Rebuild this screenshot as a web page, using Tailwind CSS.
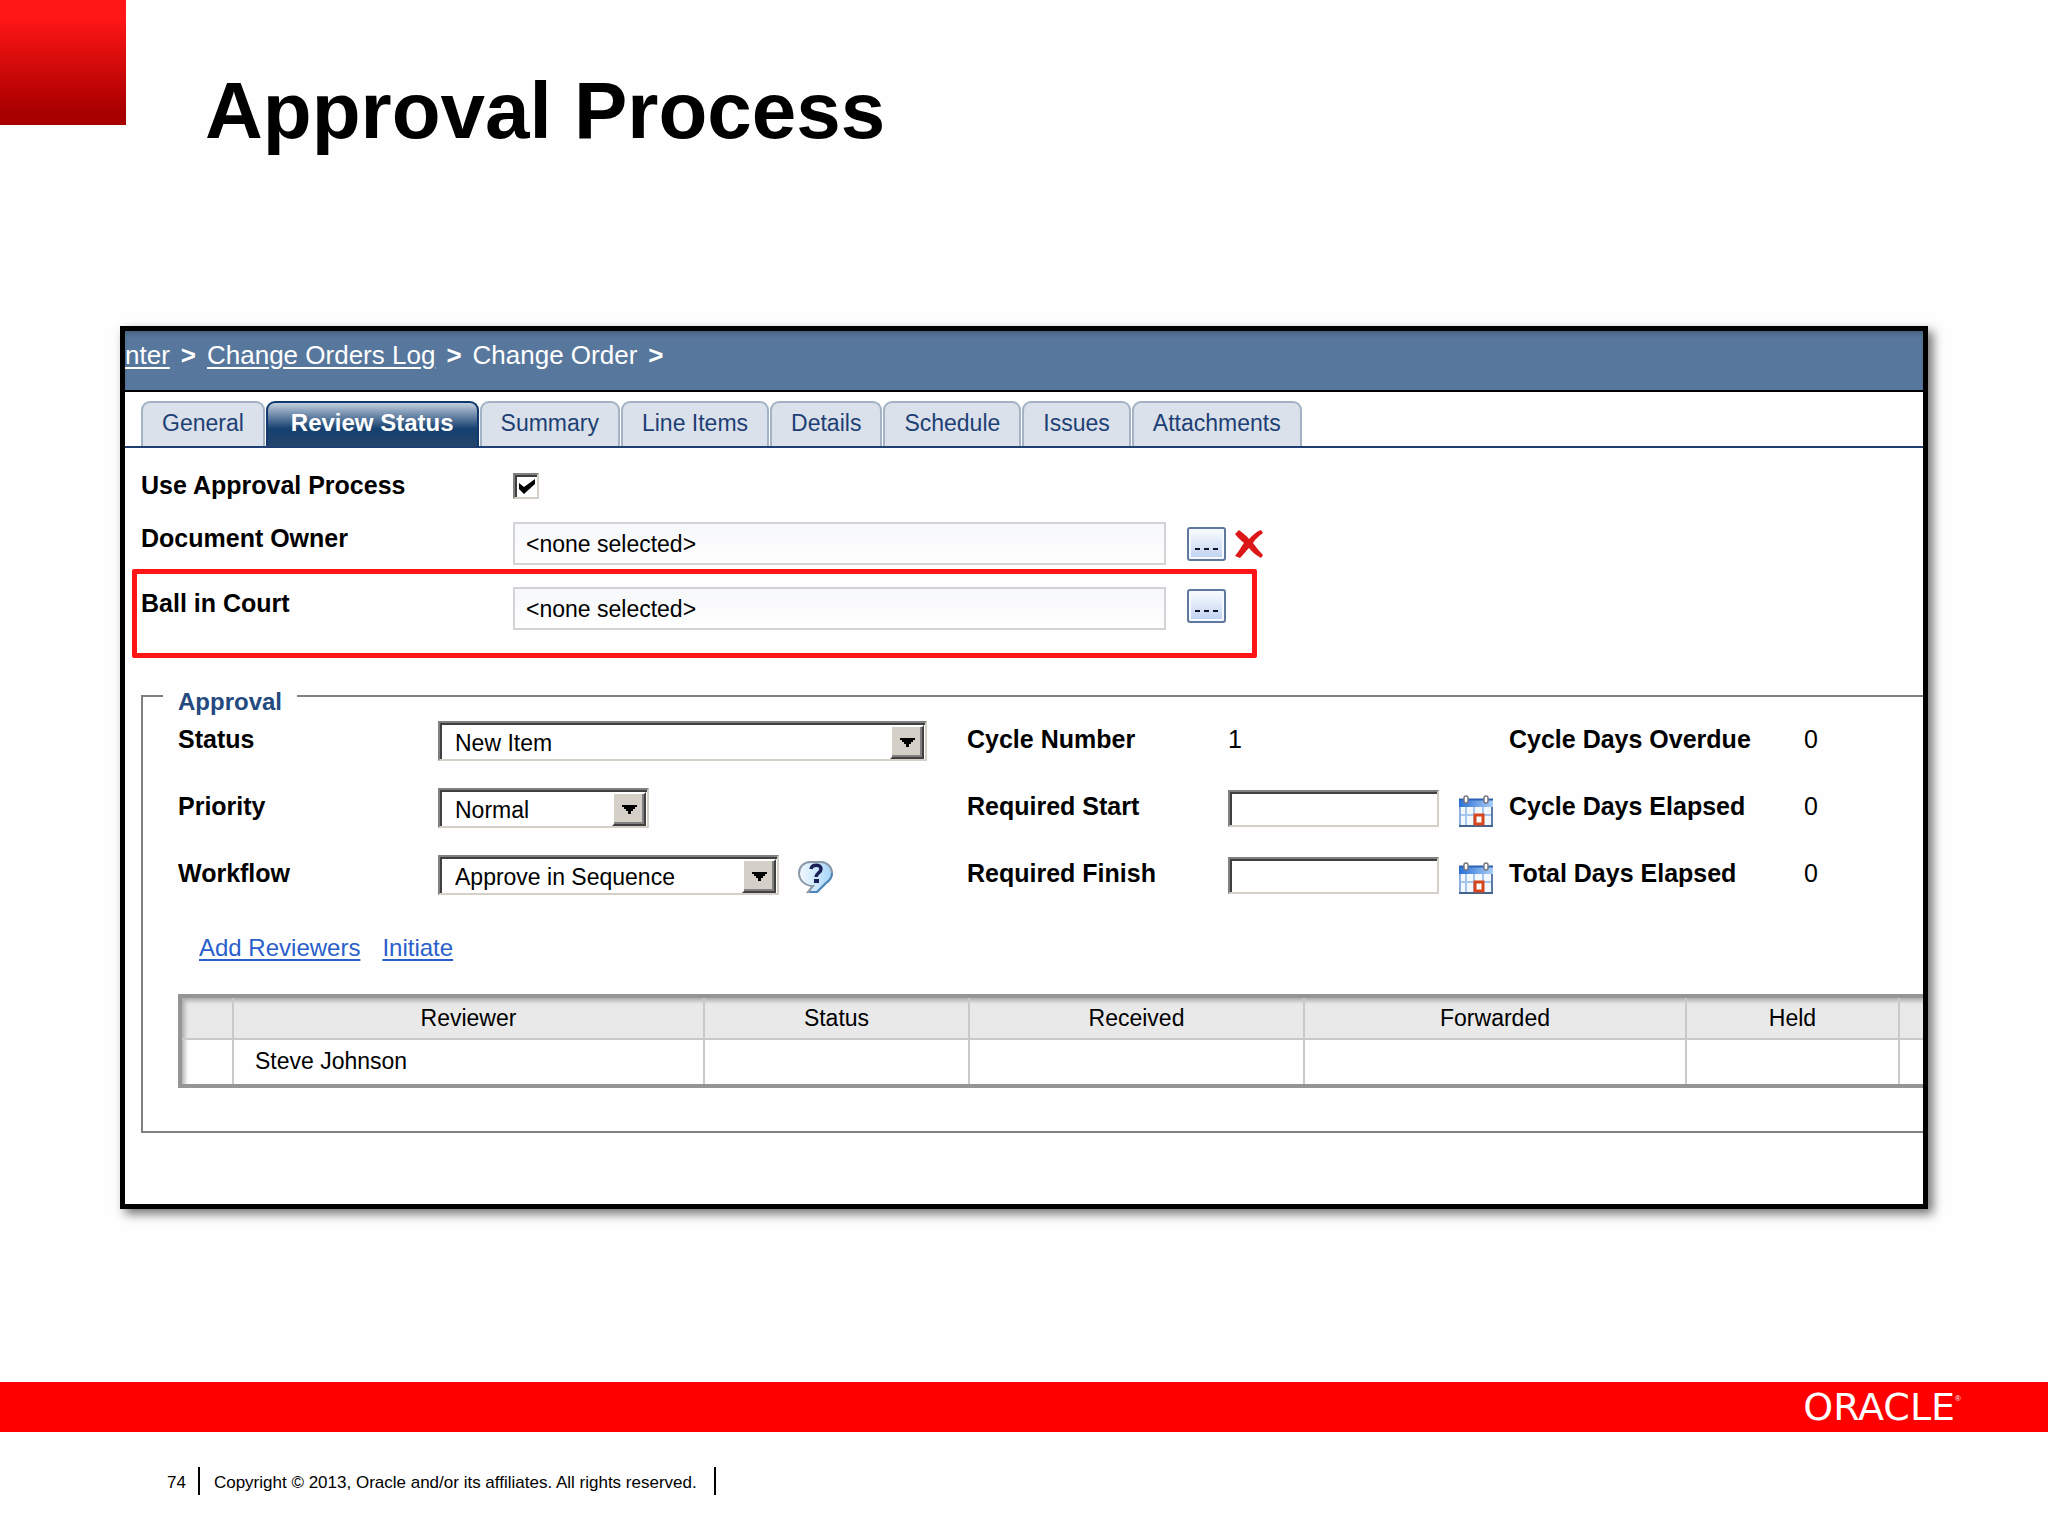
<!DOCTYPE html>
<html lang="en">

<head>
    <meta charset="UTF-8">
    <meta name="viewport" content="width=device-width, initial-scale=1.0">
    <title>Approval Process</title>
    <script src="https://cdn.jsdelivr.net/npm/@tailwindcss/browser@4"></script>
</head>

<body class="flex min-h-screen flex-col bg-[#fefefe] font-['Liberation_Sans',Arial,sans-serif] text-black">
    <!-- Shared icons -->
    <svg class="absolute size-0" aria-hidden="true">
        <defs>
            <linearGradient id="calHead" x1="0" y1="0" x2="1" y2="0">
                <stop offset="0" stop-color="#2a6fd6" />
                <stop offset="1" stop-color="#a9cdf5" />
            </linearGradient>
            <linearGradient id="bubble" x1="0" y1="0" x2="1" y2="0">
                <stop offset="0" stop-color="#f4f8fc" />
                <stop offset="1" stop-color="#a4d6fa" />
            </linearGradient>
            <symbol id="calendar" viewBox="0 0 34 32">
                <rect x="1" y="5" width="32" height="26" fill="#f3f8fe" stroke="#8fb0dc" stroke-width="2" />
                <rect x="0" y="4" width="34" height="8" fill="url(#calHead)" />
                <path d="M0 4.5h34" stroke="#2c62b4" stroke-width="2" />
                <path d="M7 12v18M15 12v18M24 12v18M2 20h30" stroke="#a5c6ee" stroke-width="2" />
                <path d="M33 12v19" stroke="#5c7ca8" stroke-width="2" />
                <path d="M0 31h34" stroke="#42648f" stroke-width="2" />
                <rect x="16" y="20" width="8" height="9" fill="#fff" stroke="#d6451b" stroke-width="3" />
                <rect x="5" y="1" width="4" height="7" rx="2" fill="#fff" stroke="#77777f" stroke-width="1.5" />
                <rect x="25" y="1" width="4" height="7" rx="2" fill="#fff" stroke="#77777f" stroke-width="1.5" />
            </symbol>
            <symbol id="arrow" viewBox="0 0 15 9">
                <path d="M0 0h15v2h-2v2h-2v2h-2v3H6V6H4V4H2V2H0z" fill="#000" />
            </symbol>
        </defs>
    </svg>

    <!-- Slide title -->
    <header class="flex h-[125px]">
        <div class="h-full w-[126px] shrink-0 bg-linear-to-b from-[#ff1616] from-15% to-[#a80000] to-90%"></div>
        <h1 class="pt-[65px] pl-[79px] text-[80px] leading-[92px] font-bold">Approval Process</h1>
    </header>

    <main class="flex-1 px-[120px] pt-[201px]">
        <div class="overflow-hidden border-[5px] border-black bg-[#fefefe] pb-[71px] shadow-[5px_5px_10px_rgba(0,0,0,0.55)]">
            <!-- Breadcrumb -->
            <nav class="flex h-[61px] items-center gap-[11px] border-b-2 border-black bg-[#58779c] pb-[12px] text-[26px] leading-[30px] whitespace-nowrap text-white shadow-[inset_0_5px_5px_-2px_#48607f]">
                <a href="#" class="underline decoration-2 underline-offset-[3px]">nter</a>
                <b>&gt;</b>
                <a href="#" class="underline decoration-2 underline-offset-[3px]">Change Orders Log</a>
                <b>&gt;</b>
                <span>Change Order</span>
                <b>&gt;</b>
            </nav>

            <!-- Tabs -->
            <div class="flex gap-px border-b-2 border-[#1f3f72] px-[16px] pt-[9px] text-[23px] leading-[28px] whitespace-nowrap text-[#1d3f74]">
                <button class="h-[45px] rounded-t-[9px] border-2 border-b-0 border-[#a3b3c5] bg-[#dae1ea] px-[19px] pb-[4px]">General</button>
                <button class="h-[45px] rounded-t-[9px] border-2 border-b-0 border-[#12396d] bg-linear-to-b from-[#c3d0df] via-[#14406f] via-60% to-[#24466d] px-[23px] pb-[4px] text-[24px] font-bold text-white">Review Status</button>
                <button class="h-[45px] rounded-t-[9px] border-2 border-b-0 border-[#a3b3c5] bg-[#dae1ea] px-[19px] pb-[4px]">Summary</button>
                <button class="h-[45px] rounded-t-[9px] border-2 border-b-0 border-[#a3b3c5] bg-[#dae1ea] px-[19px] pb-[4px]">Line Items</button>
                <button class="h-[45px] rounded-t-[9px] border-2 border-b-0 border-[#a3b3c5] bg-[#dae1ea] px-[19px] pb-[4px]">Details</button>
                <button class="h-[45px] rounded-t-[9px] border-2 border-b-0 border-[#a3b3c5] bg-[#dae1ea] px-[19px] pb-[4px]">Schedule</button>
                <button class="h-[45px] rounded-t-[9px] border-2 border-b-0 border-[#a3b3c5] bg-[#dae1ea] px-[19px] pb-[4px]">Issues</button>
                <button class="h-[45px] rounded-t-[9px] border-2 border-b-0 border-[#a3b3c5] bg-[#dae1ea] px-[19px] pb-[4px]">Attachments</button>
            </div>

            <!-- Review settings -->
            <div class="px-[16px] pt-[25px] text-[25px] leading-[28px]">
                <div class="flex h-[26px] items-center">
                    <label for="useApproval" class="w-[372px] pb-[3px] font-bold">Use Approval Process</label>
                    <span class="relative flex">
                        <input id="useApproval" type="checkbox" checked class="size-[26px] appearance-none border-2 border-t-[#808080] border-r-[#d4d0c8] border-b-[#d4d0c8] border-l-[#808080] bg-white shadow-[inset_2px_2px_0_#404040]">
                        <svg class="pointer-events-none absolute top-[6px] left-[6px] h-[15px] w-[16px]" viewBox="0 0 16 15">
                            <path d="M0 4l5 4L16 0v5L5 15 0 10z" fill="#000" />
                        </svg>
                    </span>
                </div>
                <div class="mt-[23px] flex h-[43px] items-center">
                    <label for="documentOwner" class="w-[372px] pb-[12px] font-bold">Document Owner</label>
                    <input id="documentOwner" type="text" readonly value="&lt;none selected&gt;" class="h-[43px] w-[653px] border-2 border-[#d2d3d6] bg-linear-to-b from-[#f7f8fb] to-[#fefefe] px-[11px] pt-[2px] text-[23px]">
                    <button aria-label="Select document owner" class="ml-[21px] flex h-[34px] w-[39px] items-end justify-center gap-[4px] rounded-[3px] border-2 border-[#5f789c] bg-linear-to-b from-[#fbfcff] to-[#bed1f0] pb-[9px] shadow-[inset_0_0_0_2px_#f5f8fe]">
                        <span class="h-[2px] w-[5px] bg-[#10152b]"></span>
                        <span class="h-[2px] w-[5px] bg-[#10152b]"></span>
                        <span class="h-[2px] w-[5px] bg-[#10152b]"></span>
                    </button>
                    <button aria-label="Clear document owner" class="ml-[9px]">
                        <svg class="h-[28px] w-[28px]" viewBox="0 0 28 28">
                            <path d="M0 4L4 0C9 4 12 6 14 9 18 5 22 1 26 0l2 3C24 6 20 9 18 13c3 4 6 8 10 12l-2 3C21 25 17 22 14 18 10 22 8 25 5 28L0 26C4 21 6 17 9 13 6 10 3 8 0 4z" fill="#dc1717" />
                        </svg>
                    </button>
                </div>
            </div>

            <!-- Highlighted row -->
            <div class="mt-[4px] ml-[7px] w-[1125px] rounded-[2px] border-[5px] border-[#ff1515] pt-[13px] pb-[23px] pl-[4px] text-[25px] leading-[28px]">
                <div class="flex h-[43px] items-center">
                    <label for="ballInCourt" class="w-[372px] pb-[12px] font-bold">Ball in Court</label>
                    <input id="ballInCourt" type="text" readonly value="&lt;none selected&gt;" class="h-[43px] w-[653px] border-2 border-[#d2d3d6] bg-linear-to-b from-[#f7f8fb] to-[#fefefe] px-[11px] pt-[2px] text-[23px]">
                    <button aria-label="Select ball in court" class="mb-[5px] ml-[21px] flex h-[34px] w-[39px] items-end justify-center gap-[4px] rounded-[3px] border-2 border-[#5f789c] bg-linear-to-b from-[#fbfcff] to-[#bed1f0] pb-[9px] shadow-[inset_0_0_0_2px_#f5f8fe]">
                        <span class="h-[2px] w-[5px] bg-[#10152b]"></span>
                        <span class="h-[2px] w-[5px] bg-[#10152b]"></span>
                        <span class="h-[2px] w-[5px] bg-[#10152b]"></span>
                    </button>
                </div>
            </div>

            <!-- Approval group, runs off the right edge of the panel -->
            <fieldset class="mt-[18px] ml-[16px] min-w-0 border-2 border-r-0 border-[#808080] pt-[5px] pb-[43px] pl-[35px]">
                <legend class="-ml-[15px] px-[15px] pt-[12px] text-[24px] leading-[28px] font-bold text-[#24497f]">Approval</legend>

                <div class="grid auto-rows-[40px] grid-cols-[260fr_529fr_261fr_281fr_295fr_119fr] items-center gap-y-[27px] text-[25px] leading-[28px] whitespace-nowrap">
                    <label for="status" class="pb-[4px] font-bold">Status</label>
                    <div class="relative w-[489px]">
                        <select id="status" class="h-[40px] w-full appearance-none border-2 border-t-[#808080] border-r-[#d4d0c8] border-b-[#d4d0c8] border-l-[#808080] bg-white pt-[3px] pl-[15px] text-[23px] shadow-[inset_2px_2px_0_#404040]">
                            <option>New Item</option>
                        </select>
                        <span class="pointer-events-none absolute top-[4px] right-[3px] flex h-[34px] w-[34px] items-center justify-center border-2 border-t-white border-r-[#404040] border-b-[#404040] border-l-white bg-[#d4d0c8] shadow-[inset_-2px_-2px_0_#808080]">
                            <svg class="h-[9px] w-[15px]"><use href="#arrow" /></svg>
                        </span>
                    </div>
                    <span class="pb-[4px] font-bold">Cycle Number</span>
                    <span class="pb-[4px]">1</span>
                    <span class="pb-[4px] font-bold">Cycle Days Overdue</span>
                    <span class="pb-[4px]">0</span>

                    <label for="priority" class="pb-[4px] font-bold">Priority</label>
                    <div class="relative w-[211px]">
                        <select id="priority" class="h-[40px] w-full appearance-none border-2 border-t-[#808080] border-r-[#d4d0c8] border-b-[#d4d0c8] border-l-[#808080] bg-white pt-[3px] pl-[15px] text-[23px] shadow-[inset_2px_2px_0_#404040]">
                            <option>Normal</option>
                        </select>
                        <span class="pointer-events-none absolute top-[4px] right-[3px] flex h-[34px] w-[34px] items-center justify-center border-2 border-t-white border-r-[#404040] border-b-[#404040] border-l-white bg-[#d4d0c8] shadow-[inset_-2px_-2px_0_#808080]">
                            <svg class="h-[9px] w-[15px]"><use href="#arrow" /></svg>
                        </span>
                    </div>
                    <label for="requiredStart" class="pb-[4px] font-bold">Required Start</label>
                    <div class="flex items-end gap-[20px]">
                        <input id="requiredStart" type="text" class="h-[37px] w-[211px] border-2 border-t-[#808080] border-r-[#d4d0c8] border-b-[#d4d0c8] border-l-[#808080] bg-white px-[8px] text-[23px] shadow-[inset_2px_2px_0_#404040]">
                        <button aria-label="Pick required start"><svg class="h-[32px] w-[34px]"><use href="#calendar" /></svg></button>
                    </div>
                    <span class="pb-[4px] font-bold">Cycle Days Elapsed</span>
                    <span class="pb-[4px]">0</span>

                    <label for="workflow" class="pb-[4px] font-bold">Workflow</label>
                    <div class="flex items-center gap-[19px]">
                        <div class="relative w-[341px]">
                            <select id="workflow" class="h-[40px] w-full appearance-none border-2 border-t-[#808080] border-r-[#d4d0c8] border-b-[#d4d0c8] border-l-[#808080] bg-white pt-[3px] pl-[15px] text-[23px] shadow-[inset_2px_2px_0_#404040]">
                                <option>Approve in Sequence</option>
                            </select>
                            <span class="pointer-events-none absolute top-[4px] right-[3px] flex h-[34px] w-[34px] items-center justify-center border-2 border-t-white border-r-[#404040] border-b-[#404040] border-l-white bg-[#d4d0c8] shadow-[inset_-2px_-2px_0_#808080]">
                                <svg class="h-[9px] w-[15px]"><use href="#arrow" /></svg>
                            </span>
                        </div>
                        <button aria-label="Workflow help" class="pt-[4px]">
                            <svg class="h-[32px] w-[35px]" viewBox="0 0 35 32">
                                <path d="M12 1h11c6 0 11 5 11 11 0 5-3 8-6 10l-9 9h-9l5-6c-8 0-14-6-14-13C1 6 6 1 12 1z" fill="url(#bubble)" stroke="#8b98a8" stroke-width="2" />
                                <path d="M34 12c0 5-3 8-6 10l-9 9h-7" fill="none" stroke="#4d86b8" stroke-width="2" />
                                <path d="M13 8c1-5 10-5 10 0 0 4-5 4-5 8" fill="none" stroke="#1b1f56" stroke-width="3.5" />
                                <rect x="16" y="18" width="5" height="4" fill="#1b1f56" />
                            </svg>
                        </button>
                    </div>
                    <label for="requiredFinish" class="pb-[4px] font-bold">Required Finish</label>
                    <div class="flex items-end gap-[20px]">
                        <input id="requiredFinish" type="text" class="h-[37px] w-[211px] border-2 border-t-[#808080] border-r-[#d4d0c8] border-b-[#d4d0c8] border-l-[#808080] bg-white px-[8px] text-[23px] shadow-[inset_2px_2px_0_#404040]">
                        <button aria-label="Pick required finish"><svg class="h-[32px] w-[34px]"><use href="#calendar" /></svg></button>
                    </div>
                    <span class="pb-[4px] font-bold">Total Days Elapsed</span>
                    <span class="pb-[4px]">0</span>
                </div>

                <div class="mt-[39px] flex gap-[22px] pl-[21px] text-[24px] leading-[28px] text-[#2a5fcb]">
                    <a href="#" class="underline decoration-2 underline-offset-[3px]">Add Reviewers</a>
                    <a href="#" class="underline decoration-2 underline-offset-[3px]">Initiate</a>
                </div>

                <!-- Reviewers -->
                <div class="mt-[32px] border-y-4 border-l-4 border-[#969496] shadow-[inset_4px_4px_4px_-1px_#b5b3b4]">
                    <table class="w-full table-fixed border-collapse text-[23px] leading-[28px]">
                        <colgroup>
                            <col class="w-[51px]">
                            <col class="w-[471px]">
                            <col class="w-[265px]">
                            <col class="w-[335px]">
                            <col class="w-[382px]">
                            <col class="w-[213px]">
                            <col>
                        </colgroup>
                        <thead>
                            <tr class="h-[41px] border-b-2 border-[#c9c8ca] bg-[#969496]/20">
                                <th class="border-r-2 border-[#c9c8ca]"></th>
                                <th class="border-r-2 border-[#c9c8ca] font-normal">Reviewer</th>
                                <th class="border-r-2 border-[#c9c8ca] font-normal">Status</th>
                                <th class="border-r-2 border-[#c9c8ca] font-normal">Received</th>
                                <th class="border-r-2 border-[#c9c8ca] font-normal">Forwarded</th>
                                <th class="border-r-2 border-[#c9c8ca] font-normal">Held</th>
                                <th></th>
                            </tr>
                        </thead>
                        <tbody>
                            <tr class="h-[45px]">
                                <td class="border-r-2 border-[#c9c8ca]"></td>
                                <td class="border-r-2 border-[#c9c8ca] pb-[2px] pl-[21px]">Steve Johnson</td>
                                <td class="border-r-2 border-[#c9c8ca]"></td>
                                <td class="border-r-2 border-[#c9c8ca]"></td>
                                <td class="border-r-2 border-[#c9c8ca]"></td>
                                <td class="border-r-2 border-[#c9c8ca]"></td>
                                <td></td>
                            </tr>
                        </tbody>
                    </table>
                </div>
            </fieldset>
        </div>
    </main>

    <footer>
        <div class="flex h-[50px] items-center justify-end bg-[#ff0000] pr-[87px] text-white">
            <span class="font-['DejaVu_Sans',sans-serif] text-[38px] leading-[40px]">ORACLE</span>
            <span class="pb-[16px] text-[8px] leading-[8px]">®</span>
        </div>
        <div class="flex h-[104px] items-start pt-[35px] pl-[167px] text-[17px] leading-[24px]">
            <span class="pt-[4px]">74</span>
            <p class="ml-[12px] border-x-2 border-black pt-[4px] pr-[17px] pl-[14px]">Copyright © 2013, Oracle and/or its affiliates. All rights reserved.</p>
        </div>
    </footer>
</body>

</html>
